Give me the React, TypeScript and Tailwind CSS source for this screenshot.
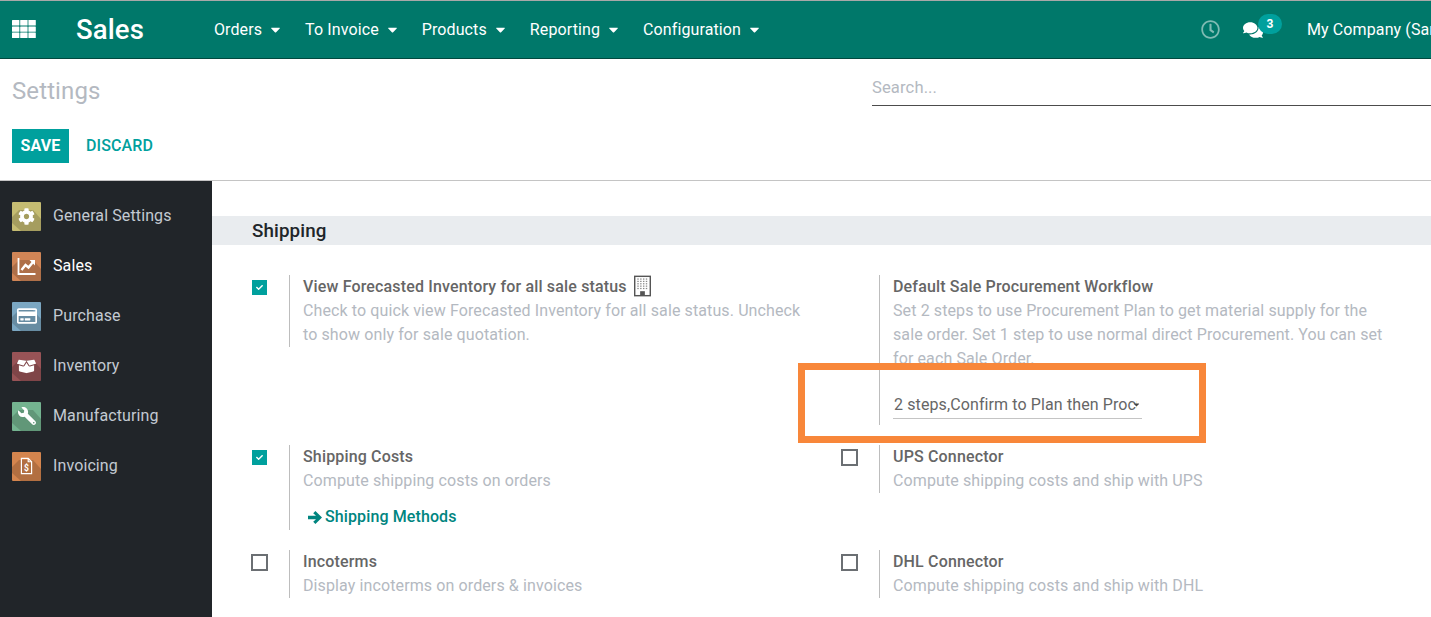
import React from 'react';
import { FaRegClock, FaComments, FaCog, FaRegCreditCard, FaBoxOpen, FaWrench, FaCheck, FaCaretDown } from 'react-icons/fa';

const menus = ['Orders', 'To Invoice', 'Products', 'Reporting', 'Configuration'];

const AppsGlyph = () => (
  <svg viewBox="0 0 24 18" className="ml-3 w-[24px] h-[18px] -mt-[2px]" fill="#fff">
    {[0, 6.4, 12.6].map((y) =>
      [0, 8.2, 16.4].map((x) => <rect key={`${x}-${y}`} x={x} y={y} width="7.4" height="5.4" rx="0.5" />)
    )}
  </svg>
);

const SalesGlyph = () => (
  <svg viewBox="0 0 20 20" className="w-[20px] h-[20px]" fill="none" stroke="#fff">
    <path d="M1.5 2v16h17" strokeWidth="1.8" />
    <path d="M4.5 14l4-5 3 2.5L16 6" strokeWidth="2.4" />
    <path d="M12.5 4h5.5v5.5z" fill="#fff" strokeWidth="0" />
  </svg>
);

const InvoiceGlyph = () => (
  <svg viewBox="0 0 20 20" className="w-[17px] h-[18px]" fill="none" stroke="#fff" strokeWidth="1.4">
    <path d="M4 1h8l4 4v14H4z" />
    <path d="M12 1v4h4" />
    <text x="10" y="15.5" fontSize="10" fontWeight="700" fill="#fff" stroke="none" textAnchor="middle" fontFamily="Roboto">$</text>
  </svg>
);

const ArrowGlyph = () => (
  <svg viewBox="0 0 14 13" className="w-[14px] h-[13px] mr-[3px]" fill="currentColor">
    <path d="M7.4 0L14 6.5 7.4 13 5.2 10.8 8 8.2H0V4.8H8L5.2 2.2z" />
  </svg>
);

const apps = [
  { name: 'General Settings', bg: 'bg-[#c5bc72]', icon: <FaCog className="text-white text-[17px]" /> },
  { name: 'Sales', bg: 'bg-[#d08556]', icon: <SalesGlyph />, active: true },
  { name: 'Purchase', bg: 'bg-[#7ba7c2]', icon: <FaRegCreditCard className="text-white text-[20px]" /> },
  { name: 'Inventory', bg: 'bg-[#985356]', icon: <FaBoxOpen className="text-white text-[19px]" /> },
  { name: 'Manufacturing', bg: 'bg-[#74b490]', icon: <FaWrench className="text-white text-[18px] -scale-x-100" /> },
  { name: 'Invoicing', bg: 'bg-[#d4854e]', icon: <InvoiceGlyph /> },
];

const AppIcon = ({ bg, children }: { bg: string; children: React.ReactNode }) => (
  <div className={`relative w-[29px] h-[29px] rounded-[1px] overflow-hidden flex items-center justify-center shrink-0 ${bg}`}>
    <svg viewBox="0 0 29 29" className="absolute inset-0 w-full h-full">
      <polygon points="7,8 21,8 29,17 29,29 9,29 0,21 0,15" fill="#000" fillOpacity="0.16" />
    </svg>
    <div className="relative flex items-center justify-center">{children}</div>
  </div>
);

const BuildingIcon = () => (
  <svg viewBox="0 0 18 22" className="inline-block w-[17px] h-[22px] ml-[7px] -mt-[3px] align-middle">
    <rect x="0.75" y="0.75" width="16.5" height="20.5" fill="#fff" stroke="#555" strokeWidth="1.5" />
    {[3, 5.5, 8, 10.5, 13].map((y) =>
      [3.5, 6.5, 9.5, 12.5].map((x) => <rect key={`${x}-${y}`} x={x} y={y} width="1.5" height="1.3" fill="#888" />)
    )}
    <rect x="6.5" y="16.5" width="5" height="4.5" fill="#555" />
  </svg>
);

const Check = ({ on }: { on?: boolean }) =>
  on ? (
    <div className="w-[15px] h-[15px] bg-[#00a09d] flex items-center justify-center">
      <FaCheck className="text-white text-[7px]" />
    </div>
  ) : (
    <div className="w-[17px] h-[17px] -ml-px -mt-px border-2 border-[#6b6f73] bg-white" />
  );

const Setting = ({
  on,
  noCheck,
  title,
  desc,
  lineH,
  titleExtra,
  children,
}: {
  on?: boolean;
  noCheck?: boolean;
  title: string;
  desc: React.ReactNode;
  lineH: string;
  titleExtra?: React.ReactNode;
  children?: React.ReactNode;
}) => (
  <div className="flex">
    <div className="w-[37px] pt-[5px] shrink-0">{!noCheck && <Check on={on} />}</div>
    <div className={`border-l border-[#bdbdbd] pl-[13px] ${lineH}`}>
      <div className="text-[16px] leading-[24px] font-medium tracking-[0.16px] text-[#666666] whitespace-nowrap">
        {title}
        {titleExtra}
      </div>
      <div className="text-[16px] leading-[24px] text-[#b4b9c1]">{desc}</div>
      {children}
    </div>
  </div>
);

export default function App() {
  return (
    <div className="h-[617px] w-[1431px] overflow-hidden relative bg-white font-['Roboto',sans-serif] tracking-[0.11px]">
      {/* top bar */}
      <div className="h-[59px] bg-[#00786a] border-t border-t-[#a8a8a8] border-b border-b-[#01493f] flex items-center text-white whitespace-nowrap">
        <AppsGlyph />
        <span className="ml-[40px] text-[27.5px] font-medium leading-none">Sales</span>
        <div className="ml-[70px] flex gap-[22px]">
          {menus.map((m) => (
            <span key={m} className="flex items-center text-[16px]">
              {m}
              <FaCaretDown className="ml-[6px] text-[15px]" />
            </span>
          ))}
        </div>
        <div className="ml-auto flex items-center">
          <FaRegClock className="text-[19px] text-[#7fbbb3]" />
          <div className="relative ml-[23px] mr-[44px]">
            <FaComments className="text-[20px]" />
            <span className="absolute -top-[6px] left-[15px] w-[24px] h-[20px] rounded-full bg-[#00a09d] text-[12px] font-bold flex items-center justify-center">
              3
            </span>
          </div>
          <span className="text-[16px] w-[124px] overflow-hidden">My Company (San Francisco)</span>
        </div>
      </div>

      {/* control panel */}
      <div className="h-[122px] border-b border-[#c4c4c4] px-3 flex flex-col">
        <div className="flex justify-between items-start pt-[16px] h-[70px]">
          <div className="text-[24px] leading-[32px] text-[#b4b9c1]">Settings</div>
          <div className="w-[559px] -mr-3 -mt-px border-b border-[#4c4c4c] h-[32px] text-[16.6px] leading-[27px] text-[#b4b9c1]">
            Search...
          </div>
        </div>
        <div className="flex items-center">
          <button className="w-[57px] h-[34px] bg-[#00a09d] text-white text-[16px] font-bold">SAVE</button>
          <span className="ml-[17px] text-[16px] font-medium text-[#00a09d]">DISCARD</span>
        </div>
      </div>

      <div className="flex h-[436px]">
        {/* sidebar */}
        <div className="w-[212px] bg-[#212529] pt-[10px] shrink-0">
          {apps.map((a) => (
            <div key={a.name} className="h-[50px] pl-3 flex items-center">
              <AppIcon bg={a.bg}>{a.icon}</AppIcon>
              <span className={`ml-3 text-[16px] ${a.active ? 'text-white' : 'text-[#c3cad2]'}`}>{a.name}</span>
            </div>
          ))}
        </div>

        {/* settings */}
        <div className="flex-1 pt-[35px] overflow-hidden">
          <div className="h-[29px] bg-[#e9ecef] pl-10 text-[18.8px] font-medium leading-[31px] text-[#212529]">Shipping</div>
          <div className="grid grid-cols-[590px_1fr] gap-y-5 pl-10 pt-[30px]">
            <Setting
              on
              title="View Forecasted Inventory for all sale status"
              titleExtra={<BuildingIcon />}
              lineH="h-[72px] w-[520px]"
              desc={<>Check to quick view Forecasted Inventory for all sale status. Uncheck<br />to show only for sale quotation.</>}
            />
            <Setting
              noCheck
              title="Default Sale Procurement Workflow"
              lineH="h-[150px] w-[510px]"
              desc={<>Set 2 steps to use Procurement Plan to get material supply for the<br />sale order. Set 1 step to use normal direct Procurement. You can set<br />for each Sale Order.</>}
            >
              <div className="mt-5 w-[249px] border-b border-[#c4c4c4] h-[28px] pl-px text-[16px] leading-[24px] text-[#666666] flex items-center justify-between overflow-hidden whitespace-nowrap">
                <span className="w-[243px] overflow-hidden">2 steps,Confirm to Plan then Procurement</span>
                <FaCaretDown className="text-[9px] text-[#444] shrink-0 -ml-[6px] mr-px" />
              </div>
            </Setting>
            <Setting on title="Shipping Costs" lineH="h-[85px] w-[500px]" desc="Compute shipping costs on orders">
              <div className="mt-3 ml-[5px] text-[16px] leading-[24px] font-medium text-[#00857f] flex items-center">
                <ArrowGlyph />
                Shipping Methods
              </div>
            </Setting>
            <Setting title="UPS Connector" lineH="h-[48px] w-[500px]" desc="Compute shipping costs and ship with UPS" />
            <Setting title="Incoterms" lineH="h-[48px] w-[500px]" desc="Display incoterms on orders & invoices" />
            <Setting title="DHL Connector" lineH="h-[48px] w-[500px]" desc="Compute shipping costs and ship with DHL" />
          </div>
        </div>
      </div>

      {/* annotation box */}
      <div className="absolute left-[798px] top-[363px] w-[408px] h-[80px] border-[7px] border-[#f8873a] pointer-events-none" />
    </div>
  );
}
